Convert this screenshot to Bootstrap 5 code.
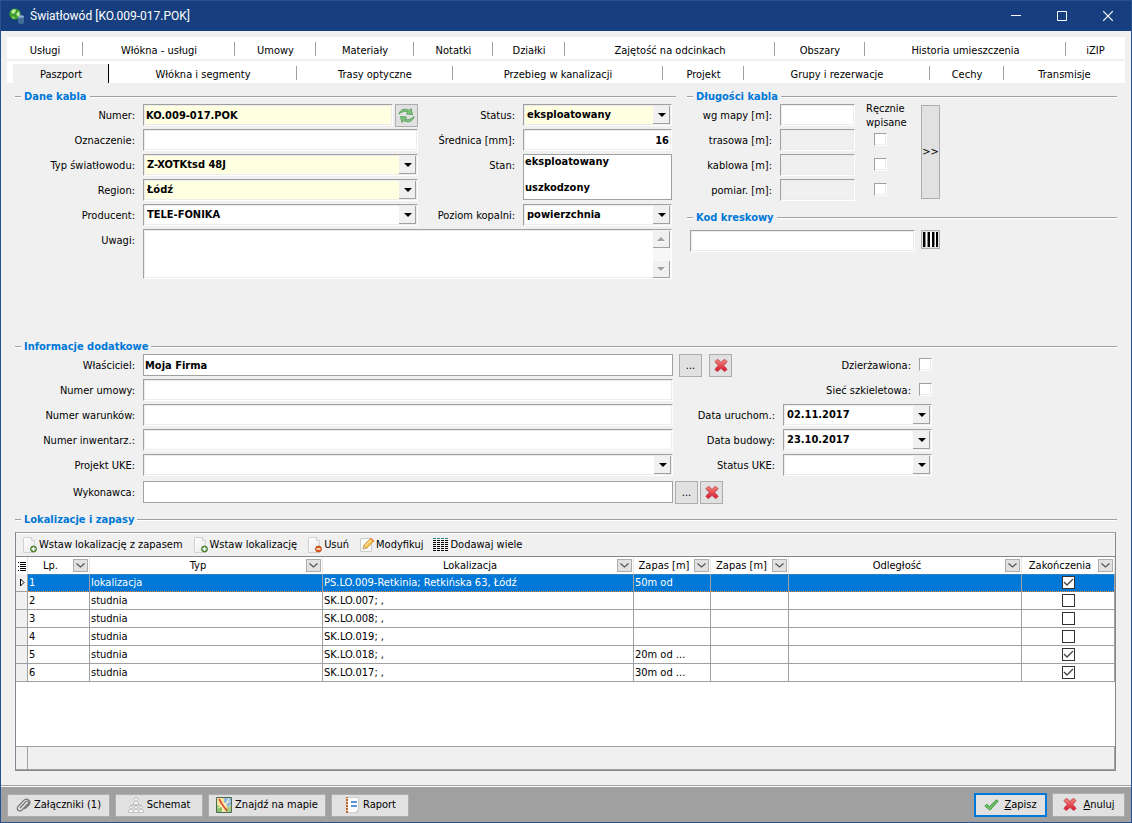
<!DOCTYPE html>
<html lang="pl">
<head>
<meta charset="utf-8">
<meta name="viewport" content="width=device-width, initial-scale=1">
<title>Światłowód [KO.009-017.POK]</title>
<link href="https://cdn.jsdelivr.net/npm/bootstrap@5.3.0/dist/css/bootstrap.min.css" rel="stylesheet">
<style>
:root{--face:#f0f0f0;--line:#a0a0a0;--accent:#0078d7}
body{font:11px/14px "DejaVu Sans Condensed","Liberation Sans",sans-serif;color:#000;background:var(--face);border:1px solid #27518f}
input,select,textarea,button{font:inherit;color:#000;border-radius:0;margin:0}
.titlebar{background:#173f80;color:#fff;height:30px;font-family:Roboto,"Noto Sans",sans-serif;font-size:12px;padding-left:7px}
.titlebar button{width:46px;height:30px;background:none;border:0;color:#fff;padding:0}
.strips{padding:6px 6px 0;display:grid;gap:2px}
.strip{display:grid;background:#fff;height:22px}
.strip a{color:#000;text-decoration:none;text-align:center;line-height:14px;padding-top:7px;position:relative}
.strip a:not(:last-child)::after{content:"";position:absolute;right:0;top:5px;height:14px;width:1px;background:var(--line)}
.strip-a{grid-template-columns:76fr 152fr 81fr 98fr 79fr 72fr 210fr 90fr 201fr 59fr}
.strip-b{grid-template-columns:96fr 188fr 156fr 210fr 81fr 186fr 74fr 121fr;padding-left:6px}
.strip .on{background:var(--face);margin-top:3px;padding-top:4px}
.strip .on:not(:last-child)::after{background:#000;top:0;height:19px}
.cap{display:flex;align-items:center;gap:3px;font-size:11px;font-weight:700;line-height:15px;color:var(--accent);margin:0;white-space:nowrap}
.cap::before,.cap::after{content:"";height:2px;border-top:1px solid var(--line);background:#fff;width:6px}
.cap::after{flex:1}
.groups{padding:6px 14px 0}
.two{display:grid;grid-template-columns:661fr 430fr;gap:11px;margin-bottom:84px}
.g1,.g2,.g3{display:grid;grid-auto-rows:25px;align-items:start}
.g1{grid-template-columns:128px 275fr 105px 149fr;padding-right:4px}
.g2{grid-template-columns:93px 75fr 66px 19px 177fr}
.g3{grid-template-columns:128px 530fr 110px 149fr 185fr}
.lab{text-align:right;padding:1px 8px 0 0;line-height:22px;white-space:nowrap}
.fld{height:22px;width:100%;min-width:0;background:#fff;border:1px solid;border-color:var(--line) #fff #fff var(--line);box-shadow:inset -1px -1px #ececec,inset 1px 1px #ececec;font-weight:700;padding:0 2px;line-height:18px;outline:0;display:block}
input.fld:disabled{background:var(--face)}
.need{background-color:#ffffe1}
.flat{border-color:var(--line);box-shadow:none;padding-left:1px}
select.drop{appearance:none;padding:0 18px 0 3px;background-repeat:no-repeat;background-position:right 1px top 1px;background-image:url("data:image/svg+xml,%3Csvg xmlns='http://www.w3.org/2000/svg' width='17' height='18'%3E%3Cpath fill='%23f0f0f0' d='M0 0h17v18H0z'/%3E%3Cpath fill='%23a0a0a0' d='M0 17h17v1H0zM16 0h1v18h-1z'/%3E%3Cpath d='M5 7h8L9 11z'/%3E%3C/svg%3E")}
.pick{height:46px;padding:0 1px;overflow:hidden}
.pick option{padding:0;line-height:14px;min-height:26px;font-weight:700}
.memo{height:50px;padding:0;display:flex}
.memo textarea{border:0;resize:none;flex:1;background:none;outline:0}
.rail{width:18px;padding:1px 1px 0 0;background:#f7f7f7;display:flex;flex-direction:column;justify-content:space-between}
.rail button{width:17px;height:17px;padding:0;border:solid var(--line);border-width:0 1px 1px 0;background:var(--face);line-height:0}
.chk{appearance:none;width:13px;height:13px;background:#fff;border:1px solid;border-color:var(--line) #fff #fff var(--line);box-shadow:inset -1px -1px #ececec;display:block}
.g2 .chk{margin:4px 0 0 19px}
.push{background:#e1e1e1;border:1px solid #adadad;padding:0;display:inline-flex;align-items:center;justify-content:center;white-space:nowrap}
.sq{width:23px;height:23px;flex:none}
.tall{grid-row:span 4;height:94px;margin-top:1px}
.listbox{flex:1;margin:5px 1px 14px 0;border:1px solid #828790;border-top-color:var(--line);display:flex;flex-direction:column;background:#fff}
.tools{background:var(--face);height:24px;border-top:1px solid #fff;border-bottom:1px solid #828790;padding-left:6px;display:flex;gap:10px}
.tools button{border:0;background:none;padding:0;display:flex;align-items:center;gap:1px;white-space:nowrap}
.rows{table-layout:fixed;width:100%;border-collapse:separate;border-spacing:0}
.rows th,.rows td{height:18px;padding:0 0 0 1px;line-height:17px;white-space:nowrap;overflow:hidden;border-right:1px solid var(--line);border-bottom:1px solid var(--line)}
.rows th{height:17px;font-weight:400;text-align:center;border-bottom:0;border-color:#e5e5e5;padding:0}
.rows td:first-child,.rows td:last-child{padding:0}
.rows td:first-child{background:var(--face)}
.rows .sel td:not(:first-child){background:var(--accent);color:#fff;border-bottom:1px dotted #f58a28;box-shadow:inset 0 1px #2c84c8}
.hd{display:flex;align-items:center}
.hd span{flex:1}
.hd button{width:15px;height:13px;border:1px solid #adadad;background:#e1e1e1;padding:0;margin-right:1px;line-height:0}
.box{appearance:none;width:13px;height:13px;background:#fff;border:1px solid #333;display:block;margin:0 auto}
.box:checked{background:#fff url("data:image/svg+xml,%3Csvg xmlns='http://www.w3.org/2000/svg' width='11' height='11'%3E%3Cpath d='M1 5l3 3 6-6' fill='none' stroke='%23444' stroke-width='1.3'/%3E%3C/svg%3E")}
.foot{height:24px;border:1px solid var(--line);border-width:1px 1px 1px 0;background:var(--face);display:flex}
.foot i{width:12px;border-right:1px solid var(--line)}
.bar{background:var(--line);border-top:1px solid var(--line);box-shadow:inset 0 1px #fff;padding:7px 6px 5px;display:flex;align-items:center;gap:5px}
.acts{display:grid;grid-template-columns:103px 88px 118px 78px;gap:5px}
.bar .push{height:23px;gap:3px}
.bar .end{height:24px;width:73px;gap:5px}
.bar .main{outline:1px solid var(--accent);outline-offset:-2px;border-color:var(--accent)}
</style>
</head>
<body class="d-flex flex-column min-vh-100">
<svg width="0" height="0" class="position-absolute" aria-hidden="true">
  <defs>
    <linearGradient id="rg" x2="0" y2="1"><stop stop-color="#ef8a7c"/><stop offset="1" stop-color="#d8132e"/></linearGradient>
    <linearGradient id="pg" x2="1" y2="1"><stop stop-color="#fff"/><stop offset="1" stop-color="#e9e9e9"/></linearGradient>
  </defs>
  <symbol id="cross" viewBox="0 0 16 16"><path d="M4 1.500Q5.500 1 8 4.500 10.500 1 12 1.500L14 3.500Q13.500 5 10.800 7.500 13 9.500 14 11.500L12 13.500Q10 13 8 10.300 6 13 4 13.500L2 11.500Q3 9.500 5.200 7.500 2.500 5 2 3.500z" fill="url(#rg)" stroke="#bd3440" stroke-width=".7" stroke-linejoin="round"/></symbol>
  <symbol id="page" viewBox="0 0 16 16"><path d="M1.500.5h8l3 3v12h-11z" fill="url(#pg)" stroke="#d2d2d2"/><path d="M9.500.5v3h3" fill="#eee" stroke="#c6c6c6" stroke-width=".7"/></symbol>
  <symbol id="add" viewBox="0 0 16 16"><use href="#page"/><circle cx="11.500" cy="12" r="3" fill="#5d9440" stroke="#3b7423" stroke-width=".8"/><path d="M9.500 12h4M11.500 10v4" stroke="#fff" stroke-width="1.300"/></symbol>
  <symbol id="del" viewBox="0 0 16 16"><use href="#page"/><circle cx="11.500" cy="12" r="3" fill="#dc5b18" stroke="#b84a12" stroke-width=".8"/><path d="M9.500 12h4" stroke="#fff" stroke-width="1.400"/></symbol>
  <symbol id="edit" viewBox="0 0 16 16"><path d="M1.500 1.500h11v13h-11z" fill="#fafafa" stroke="#ccc"/><path d="M4 12l1-4 7-7 3 3-7 7z" fill="#f6c453" stroke="#b98a2a" stroke-width=".7"/><path d="M6 9l7-7" stroke="#fff0b8"/><path d="M11 2l1.200-1.200 3 3L14 5z" fill="#ef8b4f"/><path d="M4 12l.8-3L7 11.200z" fill="#fbe6c8" stroke="#9a7a4a" stroke-width=".4"/></symbol>
  <symbol id="up" viewBox="0 0 9 5"><path d="M1 5h8L5 1z" fill="#fff"/><path d="M0 4h8L4 0z" fill="#a0a0a0"/></symbol>
  <symbol id="down" viewBox="0 0 9 5"><path d="M1 1h8L5 5z" fill="#fff"/><path d="M0 0h8L4 4z" fill="#a0a0a0"/></symbol>
  <symbol id="chev" viewBox="0 0 9 5"><path d="M.5.5l4 3.500 4-3.500" fill="none" stroke="#555" stroke-width="1.200"/></symbol>
</svg>

<header class="titlebar d-flex align-items-center">
  <svg width="18" height="18" viewBox="0 0 18 18" class="me-1 flex-shrink-0"><circle cx="7" cy="7" r="5.600" fill="#3d9a2c"/><path d="M3 4l3-2 2 1-1 3-3 1zM8 7l3-3 1 4-2 2z" fill="#b9ec96"/><path d="M4 9l3 1v2l-3-1z" fill="#86cc5c"/><path d="M10 9.500h6v6h-6z" fill="#4f7ba3"/><ellipse cx="13" cy="9.500" rx="3" ry="1.200" fill="#8fb2cf"/><path d="M10 12q3 1.300 6 0M10 14q3 1.300 6 0" stroke="#2c5b88" fill="none" stroke-width=".8"/><ellipse cx="13" cy="15.700" rx="3" ry="1.200" fill="#426f98"/></svg>
  <span class="me-auto">Światłowód [KO.009-017.POK]</span>
  <button type="button" aria-label="Minimalizuj"><svg width="10" height="10" class="d-block mx-auto"><path d="M0 4.500h10" stroke="#fff"/></svg></button>
  <button type="button" aria-label="Maksymalizuj"><svg width="10" height="10" class="d-block mx-auto"><path d="M.5.5h9v9h-9z" stroke="#fff" fill="none"/></svg></button>
  <button type="button" aria-label="Zamknij"><svg width="10" height="10" class="d-block mx-auto"><path d="M0 0l10 10M10 0L0 10" stroke="#fff" stroke-width="1.200"/></svg></button>
</header>

<nav class="strips">
  <div class="strip strip-a"><a href="#">Usługi</a><a href="#">Włókna - usługi</a><a href="#">Umowy</a><a href="#">Materiały</a><a href="#">Notatki</a><a href="#">Działki</a><a href="#">Zajętość na odcinkach</a><a href="#">Obszary</a><a href="#">Historia umieszczenia</a><a href="#">iZIP</a></div>
  <div class="strip strip-b"><a href="#" class="on">Paszport</a><a href="#">Włókna i segmenty</a><a href="#">Trasy optyczne</a><a href="#">Przebieg w kanalizacji</a><a href="#">Projekt</a><a href="#">Grupy i rezerwacje</a><a href="#">Cechy</a><a href="#">Transmisje</a></div>
</nav>

<main class="groups d-flex flex-column flex-grow-1">
  <div class="two">
    <section>
      <h2 class="cap">Dane kabla</h2>
      <div class="g1">
        <label class="lab" for="num">Numer:</label>
        <div class="d-flex" style="gap:2px"><input id="num" class="fld need" value="KO.009-017.POK"><button type="button" class="push sq" aria-label="Odśwież"><svg width="17" height="17" viewBox="0 0 17 17"><path d="M1 7C2 2.500 7 .8 11 3.500L13 1.500 14.500 7.500 8.500 7 10 5.200C7 3.800 4 4.500 1 7z" fill="#7fc47e" stroke="#4a964b" stroke-width=".8"/><path d="M16 9.500C15 14.500 10 16.200 6 13.500L4 15.500 2.500 9.500 8.500 10 7 11.800C10 13.200 13 12.500 16 9.500z" fill="#7fc47e" stroke="#4a964b" stroke-width=".8"/></svg></button></div>
        <label class="lab" for="stat">Status:</label>
        <select id="stat" class="fld drop need"><option>eksploatowany</option></select>

        <label class="lab" for="ozn">Oznaczenie:</label><input id="ozn" class="fld">
        <label class="lab" for="sr">Średnica [mm]:</label><input id="sr" class="fld text-end" value="16">

        <label class="lab" for="typ">Typ światłowodu:</label><select id="typ" class="fld drop need"><option>Z-XOTKtsd 48J</option></select>
        <label class="lab" for="stan">Stan:</label>
        <div style="grid-row:span 2"><select id="stan" class="fld flat pick" multiple><option>eksploatowany</option><option>uszkodzony</option></select></div>

        <label class="lab" for="reg">Region:</label><select id="reg" class="fld drop need"><option>Łódź</option></select><span></span>

        <label class="lab" for="prod">Producent:</label><select id="prod" class="fld drop"><option>TELE-FONIKA</option></select>
        <label class="lab" for="poz">Poziom kopalni:</label><select id="poz" class="fld drop"><option>powierzchnia</option></select>

        <label class="lab" for="uw">Uwagi:</label>
        <div class="fld memo" style="grid-column:2/-1"><textarea id="uw"></textarea><div class="rail"><button type="button" aria-label="W górę"><svg width="9" height="5"><use href="#up"/></svg></button><button type="button" aria-label="W dół"><svg width="9" height="5"><use href="#down"/></svg></button></div></div>
      </div>
    </section>
    <section>
      <h2 class="cap">Długości kabla</h2>
      <div class="g2">
        <label class="lab" for="d1">wg mapy [m]:</label><input id="d1" class="fld"><span class="text-nowrap" style="margin:-2px 0 0 11px">Ręcznie<br>wpisane</span>
        <button type="button" class="push tall">&gt;&gt;</button><span></span>
        <label class="lab" for="d2">trasowa [m]:</label><input id="d2" class="fld" disabled><input type="checkbox" class="chk" aria-label="trasowa ręcznie"><span></span>
        <label class="lab" for="d3">kablowa [m]:</label><input id="d3" class="fld" disabled><input type="checkbox" class="chk" aria-label="kablowa ręcznie"><span></span>
        <label class="lab" for="d4">pomiar. [m]:</label><input id="d4" class="fld" disabled><input type="checkbox" class="chk" aria-label="pomiar ręcznie"><span></span>
      </div>
      <h2 class="cap" style="margin:6px 0 5px">Kod kreskowy</h2>
      <div class="g2">
        <div style="grid-column:span 3;padding:0 6px 0 3px"><input class="fld" aria-label="Kod kreskowy"></div>
        <button type="button" class="push" style="height:19px" aria-label="Skanuj"><svg width="15" height="15"><path d="M0 0h2v15H0zM5 0h2v15H5zM9 0h2v15H9zM13 0h2v15h-2z"/><path d="M2 0h1v15H2zM4 0h1v15H4zM11 0h1v15h-1z" opacity=".4"/><path d="M3 0h1v15H3zM7 0h2v15H7zM12 0h1v15h-1z" fill="#fff"/></svg></button>
      </div>
    </section>
  </div>

  <section>
    <h2 class="cap">Informacje dodatkowe</h2>
    <div class="g3">
      <label class="lab" for="wl">Właściciel:</label><input id="wl" class="fld flat" value="Moja Firma">
      <div class="d-flex" style="gap:7px;padding-left:6px"><button type="button" class="push sq" aria-label="Wybierz">...</button><button type="button" class="push sq" aria-label="Usuń"><svg width="16" height="16"><use href="#cross"/></svg></button></div>
      <div class="d-flex justify-content-end"><label class="lab" for="dz">Dzierżawiona:</label><input type="checkbox" id="dz" class="chk mt-1"></div><span></span>

      <label class="lab" for="nu">Numer umowy:</label><input id="nu" class="fld"><span></span>
      <div class="d-flex justify-content-end"><label class="lab" for="ss">Sieć szkieletowa:</label><input type="checkbox" id="ss" class="chk mt-1"></div><span></span>

      <label class="lab" for="nw">Numer warunków:</label><input id="nw" class="fld">
      <label class="lab" for="du">Data uruchom.:</label><select id="du" class="fld drop"><option>02.11.2017</option></select><span></span>

      <label class="lab" for="ni">Numer inwentarz.:</label><input id="ni" class="fld">
      <label class="lab" for="db">Data budowy:</label><select id="db" class="fld drop"><option>23.10.2017</option></select><span></span>

      <label class="lab" for="pu">Projekt UKE:</label><select id="pu" class="fld drop"><option></option></select>
      <label class="lab" for="su">Status UKE:</label><select id="su" class="fld drop"><option></option></select><span></span>
    </div>
    <div class="g3" style="margin-top:2px">
      <label class="lab" for="wy">Wykonawca:</label><input id="wy" class="fld flat">
      <div class="d-flex" style="gap:2px;padding-left:2px"><button type="button" class="push sq" aria-label="Wybierz">...</button><button type="button" class="push sq" aria-label="Usuń"><svg width="16" height="16"><use href="#cross"/></svg></button></div>
    </div>
  </section>

  <section class="d-flex flex-column flex-grow-1" style="margin-top:6px">
    <h2 class="cap">Lokalizacje i zapasy</h2>
    <div class="listbox">
      <div class="tools">
        <button type="button"><svg width="16" height="16"><use href="#add"/></svg>Wstaw lokalizację z zapasem</button>
        <button type="button"><svg width="16" height="16"><use href="#add"/></svg>Wstaw lokalizację</button>
        <button type="button"><svg width="16" height="16"><use href="#del"/></svg>Usuń</button>
        <button type="button"><svg width="16" height="16"><use href="#edit"/></svg>Modyfikuj</button>
        <button type="button"><svg width="16" height="16" viewBox="0 0 16 16"><path d="M0 1.500h15" stroke="#2c8a8a" stroke-dasharray="3 1"/><path d="M0 3.500h15M0 5.500h15M0 7.500h15M0 9.500h15M0 11.500h15M0 13.500h15" stroke="#000" stroke-dasharray="3 1"/></svg>Dodawaj wiele</button>
      </div>
      <table class="rows">
        <colgroup><col style="width:12px"><col style="width:62px"><col style="width:21.2%"><col style="width:28.3%"><col style="width:77px"><col style="width:78px"><col><col style="width:93px"></colgroup>
        <thead><tr>
          <th><svg width="8" height="10" class="d-block mx-auto"><path d="M2 1.500h6M2 3.500h6M2 5.500h6M2 7.500h6M2 9.500h6M0 1.500h1M0 5.500h1M0 9.500h1" stroke="#000"/></svg></th>
          <th><div class="hd"><span>Lp.</span><button type="button" aria-label="Filtr"><svg width="9" height="5"><use href="#chev"/></svg></button></div></th>
          <th><div class="hd"><span>Typ</span><button type="button" aria-label="Filtr"><svg width="9" height="5"><use href="#chev"/></svg></button></div></th>
          <th><div class="hd"><span>Lokalizacja</span><button type="button" aria-label="Filtr"><svg width="9" height="5"><use href="#chev"/></svg></button></div></th>
          <th><div class="hd"><span>Zapas [m]</span><button type="button" aria-label="Filtr"><svg width="9" height="5"><use href="#chev"/></svg></button></div></th>
          <th><div class="hd"><span>Zapas [m]</span><button type="button" aria-label="Filtr"><svg width="9" height="5"><use href="#chev"/></svg></button></div></th>
          <th><div class="hd"><span>Odległość</span><button type="button" aria-label="Filtr"><svg width="9" height="5"><use href="#chev"/></svg></button></div></th>
          <th><div class="hd"><span>Zakończenia</span><button type="button" aria-label="Filtr"><svg width="9" height="5"><use href="#chev"/></svg></button></div></th>
        </tr></thead>
        <tbody>
          <tr class="sel"><td><svg width="6" height="9" class="d-block mx-auto"><path d="M1.500 1v7L5 4.500z" fill="#fff" stroke="#000"/></svg></td><td>1</td><td>lokalizacja</td><td>PS.LO.009-Retkinia; Retkińska 63, Łódź</td><td>50m od</td><td></td><td></td><td><input type="checkbox" class="box" aria-label="Zakończenia 1" checked></td></tr>
          <tr><td></td><td>2</td><td>studnia</td><td>SK.LO.007; ,</td><td></td><td></td><td></td><td><input type="checkbox" class="box" aria-label="Zakończenia 2"></td></tr>
          <tr><td></td><td>3</td><td>studnia</td><td>SK.LO.008; ,</td><td></td><td></td><td></td><td><input type="checkbox" class="box" aria-label="Zakończenia 3"></td></tr>
          <tr><td></td><td>4</td><td>studnia</td><td>SK.LO.019; ,</td><td></td><td></td><td></td><td><input type="checkbox" class="box" aria-label="Zakończenia 4"></td></tr>
          <tr><td></td><td>5</td><td>studnia</td><td>SK.LO.018; ,</td><td>20m od ...</td><td></td><td></td><td><input type="checkbox" class="box" aria-label="Zakończenia 5" checked></td></tr>
          <tr><td></td><td>6</td><td>studnia</td><td>SK.LO.017; ,</td><td>30m od ...</td><td></td><td></td><td><input type="checkbox" class="box" aria-label="Zakończenia 6" checked></td></tr>
        </tbody>
      </table>
      <div class="foot mt-auto"><i></i></div>
    </div>
  </section>
</main>

<footer class="bar">
  <div class="acts">
  <button type="button" class="push"><svg width="15" height="15" viewBox="0 0 15 15"><path d="M4 10l6-6.500q1.500-1 2.300 0t0 2L6 12q-2 1.800-3.800.2T2 8.500l6-6.300q2.500-2 4.800 0t.2 4.600L8.500 11" fill="none" stroke="#777" stroke-width="1.200"/></svg>Załączniki (1)</button>
  <button type="button" class="push"><svg width="16" height="16" viewBox="0 0 16 16" fill="#fafafa" stroke="#b4b4b4" stroke-width=".8"><path d="M8 6v3M3 10V8h10v2" fill="none"/><circle cx="8" cy="2.500" r="1.800"/><path d="M5.500 7.500q0-3.500 2.500-3.500t2.500 3.500z"/><circle cx="3" cy="10.500" r="1.500"/><circle cx="8" cy="10.500" r="1.500"/><circle cx="13" cy="10.500" r="1.500"/><path d="M.5 15.500v-2q2.500-2.500 5 0v2zM5.500 15.500v-2q2.500-2.500 5 0v2zM10.500 15.500v-2q2.500-2.500 5 0v2z"/></svg>Schemat</button>
  <button type="button" class="push"><svg width="16" height="16" viewBox="0 0 16 16"><path d="M.5.5h15v15H.5z" fill="#f3e39a" stroke="#4c6b54"/><path d="M8 1h7v7l-3 2-4-5z" fill="#8fb8e6"/><path d="M1 8l5 3v4H1z" fill="#8cc06a"/><path d="M10 11l5-2v6h-5z" fill="#a5cc80"/><path d="M2 11L14 4M6 15L13 1" stroke="#fff7cc"/><path d="M3 2l3 5 5 7" stroke="#e0432f" stroke-width="1.500" fill="none"/></svg>Znajdź na mapie</button>
  <button type="button" class="push"><svg width="16" height="16" viewBox="0 0 16 16"><path d="M2.500.5h12v15h-12z" fill="#fdfdfd" stroke="#ccc"/><path d="M2 0h2v16H2z" fill="#b9652f"/><path d="M1 1.500h3M1 4.500h3M1 7.500h3M1 10.500h3M1 13.500h3" stroke="#e9d2c0"/><path d="M7 4h6v2H7zM7 8h6v2H7z" fill="#5b94dd"/><path d="M11 15.500q3-.5 3.500-4" fill="#eee" stroke="#ccc"/></svg>Raport</button>
  </div>
  <button type="button" class="push end main ms-auto"><svg width="15" height="12" viewBox="0 0 15 12"><path d="M.8 7L3 5.200 5.500 7.500 12.300.8 14.200 2 6 11.300z" fill="#68c063" stroke="#3f8f3f" stroke-width=".8"/></svg><span><u>Z</u>apisz</span></button>
  <button type="button" class="push end"><svg width="16" height="16"><use href="#cross"/></svg><span><u>A</u>nuluj</span></button>
</footer>
<script src="https://cdn.jsdelivr.net/npm/bootstrap@5.3.0/dist/js/bootstrap.bundle.min.js"></script>
</body>
</html>
